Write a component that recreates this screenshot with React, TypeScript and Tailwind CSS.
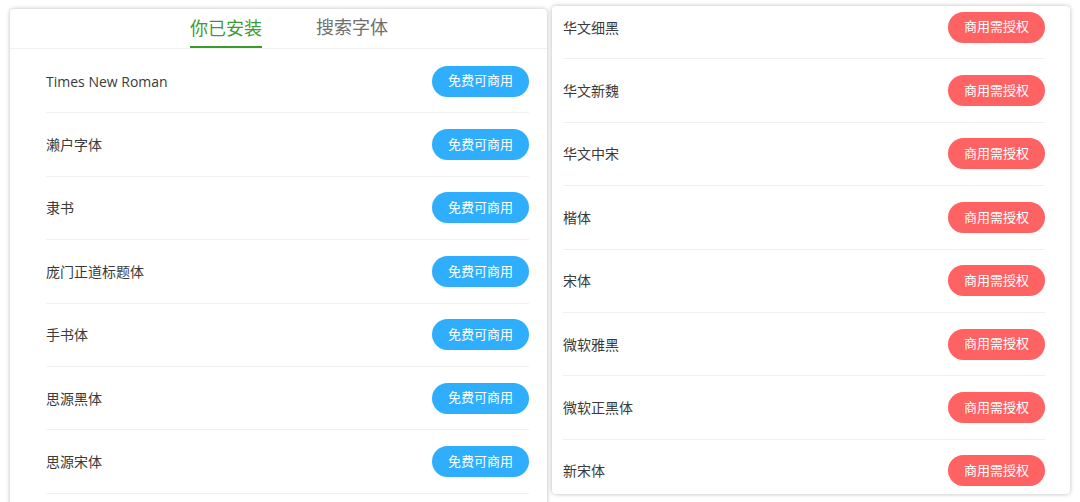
import React from "react";

const FONT = { fontFamily: '"Open Sans", "Noto Sans CJK SC", sans-serif' };

const INSTALLED = [
  "Times New Roman",
  "濑户字体",
  "隶书",
  "庞门正道标题体",
  "手书体",
  "思源黑体",
  "思源宋体",
];

const LICENSED = [
  "华文细黑",
  "华文新魏",
  "华文中宋",
  "楷体",
  "宋体",
  "微软雅黑",
  "微软正黑体",
  "新宋体",
];

function FontRow({ name, free }: { name: string; free: boolean }) {
  return (
    <div className="flex h-[63.4px] items-center justify-between border-b border-[#f0f0f0]">
      <span className="text-[14px] text-[#3a3a3a]">{name}</span>
      <span
        className={
          free
            ? "flex h-[31px] w-[97px] items-center justify-center rounded-full bg-[#2eaefc] text-[13px] text-white"
            : "flex h-[31px] w-[97px] items-center justify-center rounded-full bg-[#ff6262] text-[13px] text-white"
        }
      >
        {free ? "免费可商用" : "商用需授权"}
      </span>
    </div>
  );
}

export default function App() {
  return (
    <div className="flex h-[502px] w-[1080px] items-start overflow-hidden bg-white" style={FONT}>
      {/* installed fonts */}
      <div className="ml-[10px] mt-[9px] h-[510px] w-[537px] rounded-[4px] bg-white shadow-[0_0_4px_rgba(0,0,0,0.28)]">
        <div className="flex h-[40px] gap-[54px] border-b border-[#f0f0f0] pl-[180px]">
          <div className="flex h-full items-center border-b-2 border-[#3a9a2e] pt-[1px] text-[18px] text-[#3f9c35]">
            你已安装
          </div>
          <div className="flex h-full items-center pb-[2px] text-[18px] text-[#707070]">搜索字体</div>
        </div>
        <div className="pl-[36px] pr-[18px] pt-[1px]">
          {INSTALLED.map((n) => (
            <FontRow key={n} name={n} free />
          ))}
        </div>
      </div>

      {/* licensed fonts */}
      <div className="ml-[5px] mt-[6px] h-[488px] w-[518px] overflow-hidden rounded-[4px] bg-white shadow-[0_0_4px_rgba(0,0,0,0.28)]">
        <div className="-mt-[10px] pl-[11px] pr-[25px]">
          {LICENSED.map((n) => (
            <FontRow key={n} name={n} free={false} />
          ))}
        </div>
      </div>
    </div>
  );
}
